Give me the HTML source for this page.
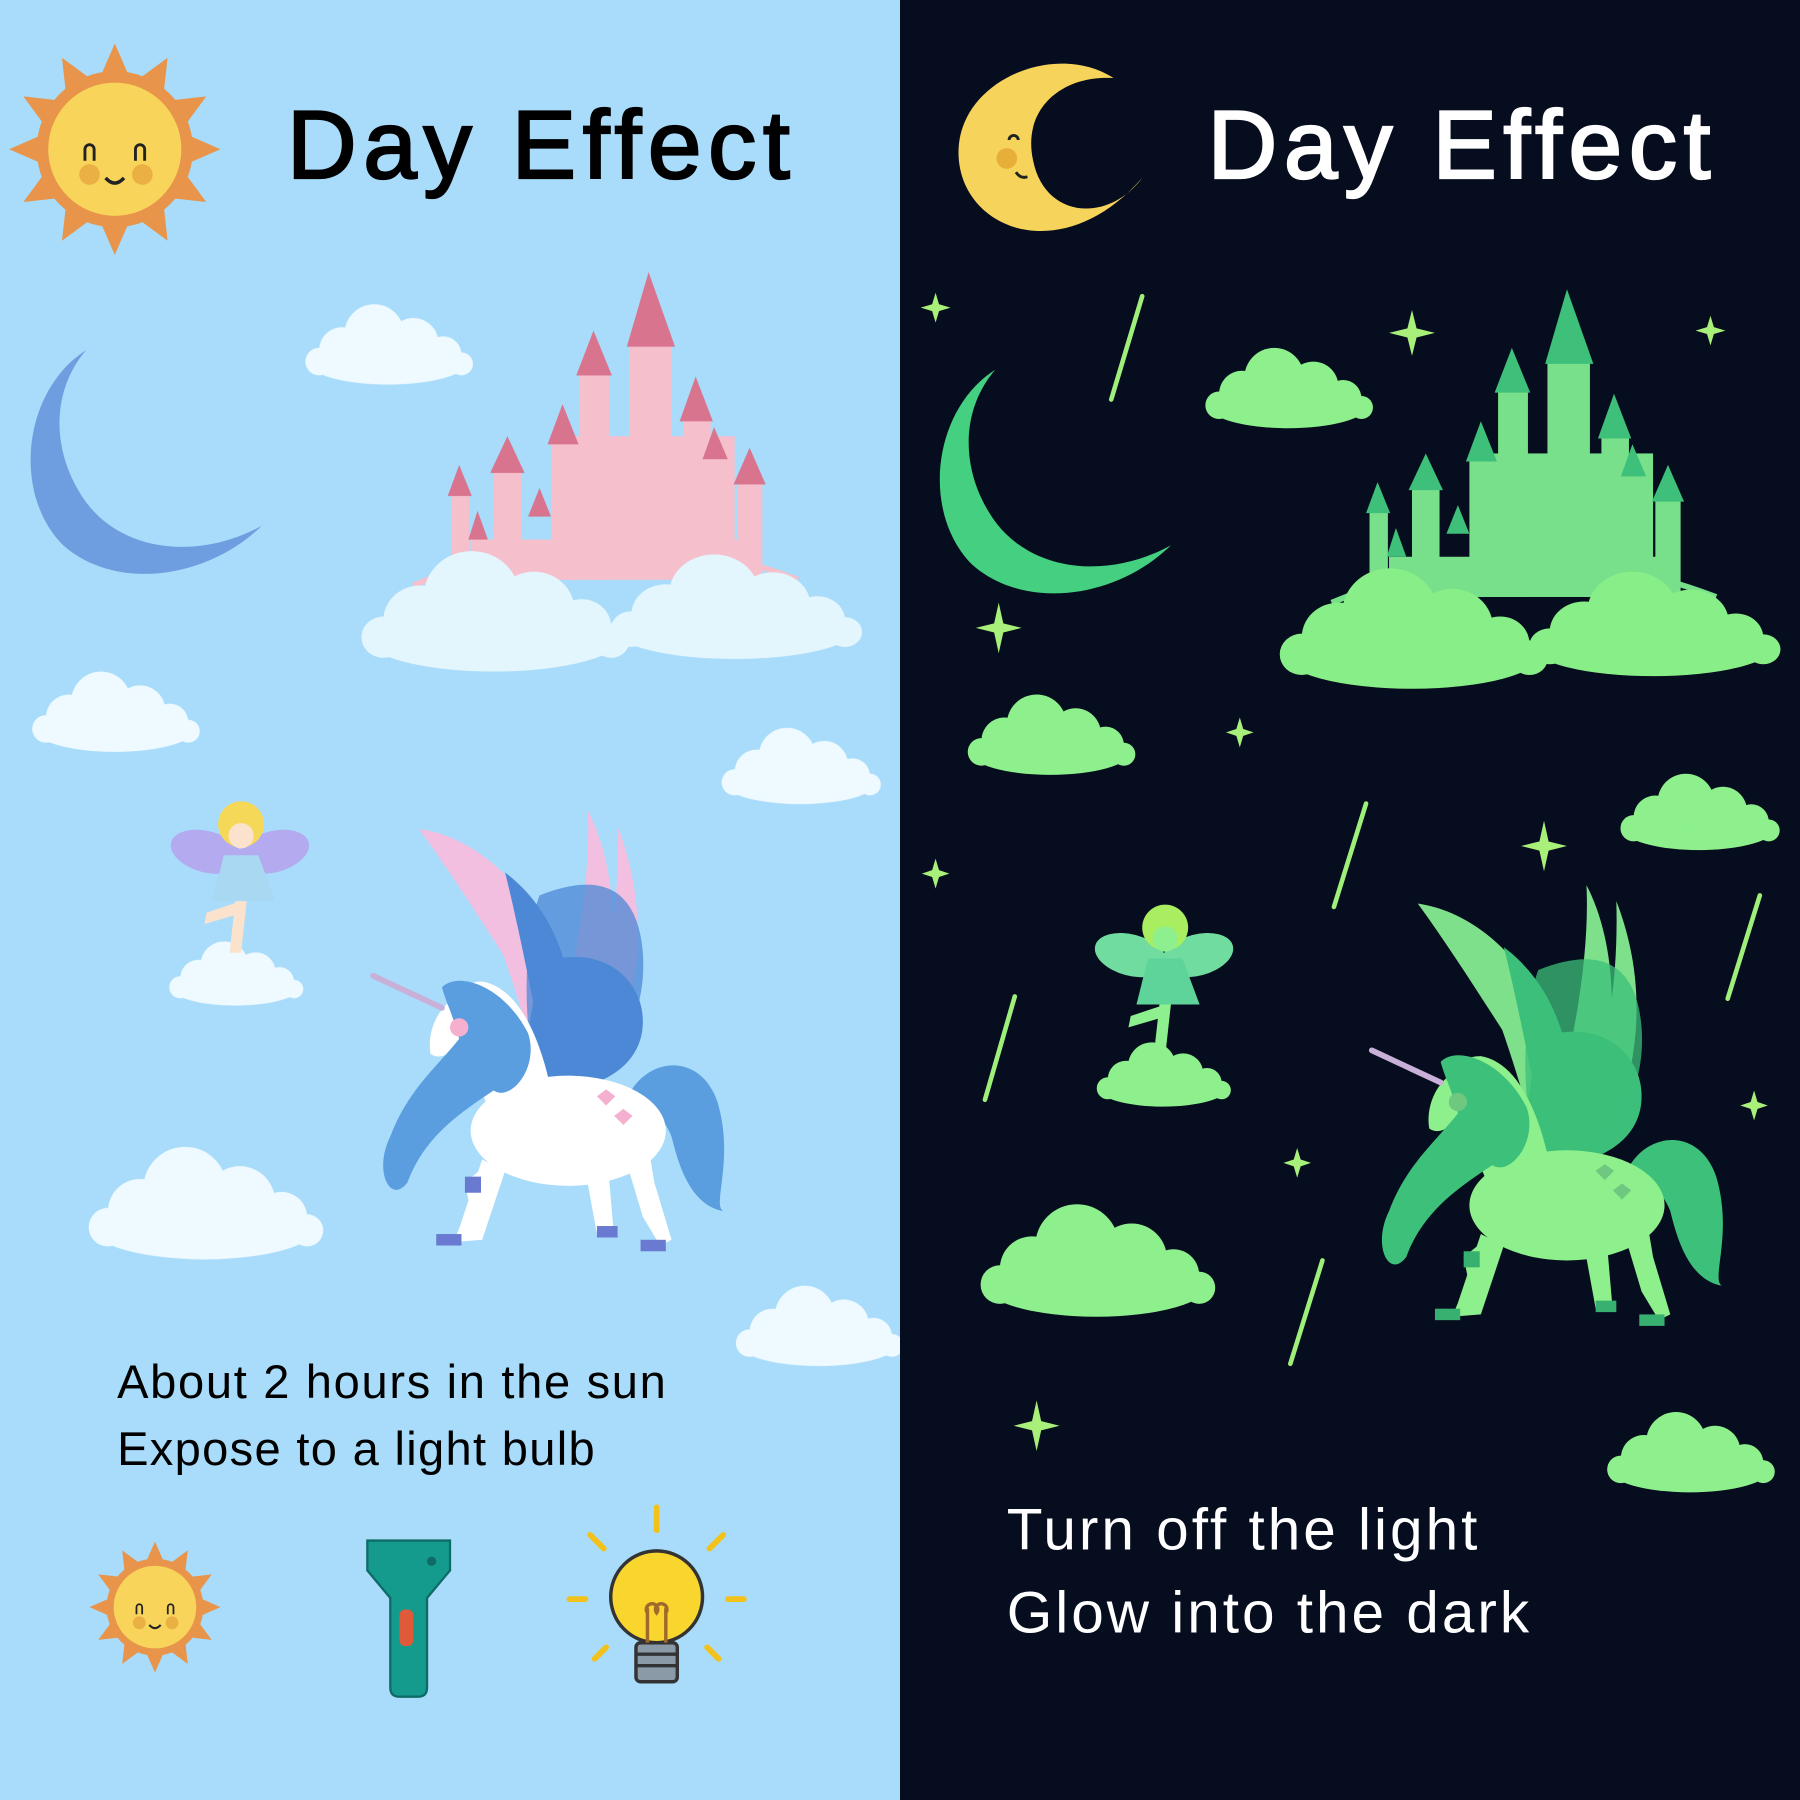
<!DOCTYPE html>
<html><head><meta charset="utf-8"><style>
html,body{margin:0;padding:0;width:1800px;height:1800px;overflow:hidden;background:#060d1e}
svg{display:block}
.t{font-family:"Liberation Sans",sans-serif}
</style></head><body>
<svg width="1800" height="1800" viewBox="0 0 1568 1568" xmlns="http://www.w3.org/2000/svg">
<defs>
<g id="cloud">
 <ellipse cx="0" cy="10" rx="70" ry="20"/>
 <circle cx="-40" cy="0" r="20"/><circle cx="-12" cy="-14" r="26"/><circle cx="22" cy="-6" r="22"/><circle cx="48" cy="4" r="16"/><circle cx="-60" cy="10" r="12"/><circle cx="64" cy="12" r="10"/>
</g>
<g id="uni">
 <path d="M365 722 C420 730 470 780 490 850 L470 880 C430 820 400 770 365 722Z" style="fill:var(--w1)"/>
 <path d="M400 735 C450 760 480 820 490 880 L460 900 C440 830 420 780 400 735Z" style="fill:var(--w1)"/>
 <path d="M440 760 C480 790 500 840 500 900 L470 900 C460 850 450 800 440 760Z" style="fill:var(--w2)"/>
 <path d="M512 706 C540 760 540 840 520 900 L480 920 C500 850 515 770 512 706Z" style="fill:var(--w1)"/>
 <path d="M538 720 C565 790 560 860 530 930 L500 930 C530 860 540 790 538 720Z" style="fill:var(--w1)"/>
 <path d="M470 840 C520 820 560 850 560 890 C560 930 520 950 480 950 L460 900Z" style="fill:var(--w2)"/>
 <path d="M470 780 C520 760 555 770 560 830 C565 900 520 950 470 950 C455 900 455 820 470 780Z" style="fill:var(--w2);opacity:.75"/>
 <path d="M545 960 C560 920 610 915 625 960 C640 1010 620 1050 630 1055 C600 1050 590 1010 585 990 C575 965 560 965 545 990Z" style="fill:var(--mane)"/>
 <path d="M430 1010 L405 1030 L410 1055 L425 1045 L440 1020Z" style="fill:var(--body)"/>
 <path d="M440 1020 L420 1080 L395 1082 L400 1070 L420 1010Z" style="fill:var(--body)"/>
 <path d="M510 1020 L520 1075 L535 1078 L530 1020Z" style="fill:var(--body)"/>
 <path d="M545 1010 L560 1060 L575 1085 L585 1080 L570 1030 L565 1000Z" style="fill:var(--body)"/>
 <rect x="380" y="1075" width="22" height="10" style="fill:var(--hoof)"/>
 <rect x="520" y="1068" width="18" height="10" style="fill:var(--hoof)"/>
 <rect x="558" y="1080" width="22" height="10" style="fill:var(--hoof)"/>
 <rect x="405" y="1025" width="14" height="14" style="fill:var(--hoof)"/>
 <ellipse cx="495" cy="985" rx="85" ry="48" style="fill:var(--body)"/>
 <path d="M410 900 C395 870 400 855 420 855 C450 860 470 900 480 950 L440 990 C420 960 410 930 410 900Z" style="fill:var(--body)"/>
 <path d="M395 870 C380 880 372 900 375 918 C385 925 395 915 405 905Z" style="fill:var(--body)"/>
 <path d="M325 850 L385 878" stroke="#c9b0d8" stroke-width="5" stroke-linecap="round"/>
 <path d="M385 860 C400 845 440 860 460 900 C470 930 445 960 430 950 C400 970 370 990 355 1030 C340 1050 325 1020 340 990 C355 950 380 930 400 905 C395 885 388 872 385 860Z" style="fill:var(--mane)"/>
 <circle cx="400" cy="895" r="8" style="fill:var(--cheek)"/>
 <path d="M520 955 l8 -6 l8 6 l-8 8z M535 972 l8 -6 l8 6 l-8 8z" style="fill:var(--cheek)"/>
</g>
<g id="castle">
 <rect x="490" y="380" width="150" height="125" style="fill:var(--c)"/>
 <rect x="548" y="300" width="37" height="200" style="fill:var(--c)"/>
 <rect x="505" y="325" width="26" height="180" style="fill:var(--c)"/>
 <rect x="480" y="385" width="22" height="120" style="fill:var(--c)"/>
 <rect x="595" y="365" width="24" height="140" style="fill:var(--c)"/>
 <rect x="430" y="410" width="24" height="95" style="fill:var(--c)"/>
 <rect x="393" y="430" width="16" height="75" style="fill:var(--c)"/>
 <rect x="642" y="420" width="22" height="85" style="fill:var(--c)"/>
 <rect x="410" y="470" width="240" height="35" style="fill:var(--c)"/>
 <path d="M546 302 L565 237 L588 302Z M502 327 L517 288 L533 327Z M477 387 L490 352 L504 387Z M592 367 L606 328 L621 367Z M427 412 L442 380 L457 412Z M390 432 L400 405 L411 432Z M639 422 L653 390 L667 422Z M612 400 L622 372 L634 400Z M408 470 L416 445 L425 470Z M460 450 L470 425 L480 450Z" style="fill:var(--r)"/>
 <path d="M360 510 Q525 440 695 505" fill="none" style="stroke:var(--c)" stroke-width="5"/>
</g>
<g id="crescent">
 <path d="M75 305 C20 340 10 430 55 475 C100 515 180 505 228 458 C170 490 100 480 70 430 C45 390 45 340 75 305Z"/>
</g>
<g id="fairy">
 <ellipse cx="180" cy="742" rx="32" ry="18" transform="rotate(15 180 742)" style="fill:var(--fw)"/>
 <ellipse cx="238" cy="742" rx="32" ry="18" transform="rotate(-15 238 742)" style="fill:var(--fw)"/>
 <path d="M195 745 L225 745 L240 785 L185 785Z" style="fill:var(--fd)"/>
 <path d="M205 785 L200 830 L210 830 L215 785Z M210 785 L180 795 L178 805 L212 795Z" style="fill:var(--sk)"/>
 <circle cx="210" cy="718" r="20" style="fill:var(--hair)"/>
 <circle cx="210" cy="728" r="11" style="fill:var(--sk)"/>
</g>
<g id="sun">
 <g fill="#e8944a">
  <polygon points="0,-92 14,-60 -14,-60"/><polygon points="0,92 14,60 -14,60"/><polygon points="-92,0 -60,14 -60,-14"/><polygon points="92,0 60,14 60,-14"/>
  <g transform="rotate(30)"><polygon points="0,-92 14,-60 -14,-60"/><polygon points="0,92 14,60 -14,60"/><polygon points="-92,0 -60,14 -60,-14"/><polygon points="92,0 60,14 60,-14"/></g>
  <g transform="rotate(60)"><polygon points="0,-92 14,-60 -14,-60"/><polygon points="0,92 14,60 -14,60"/><polygon points="-92,0 -60,14 -60,-14"/><polygon points="92,0 60,14 60,-14"/></g>
  <circle r="68"/>
 </g>
 <circle r="58" fill="#f8d45a"/>
 <circle cx="-22" cy="22" r="9" fill="#eab044"/><circle cx="24" cy="22" r="9" fill="#eab044"/>
 <path d="M-26 10 v-10 a4 4 0 0 1 8 0 v10 M18 10 v-10 a4 4 0 0 1 8 0 v10" stroke="#222" stroke-width="2.5" fill="none"/>
 <path d="M-8 25 q8 9 16 0" stroke="#222" stroke-width="3" fill="none"/>
</g>
</defs>

<rect x="0" y="0" width="784" height="1568" fill="#a8dcfa"/>
<use href="#sun" transform="translate(100,130)"/>
<text x="250" y="155" class="t" font-size="84" fill="#000" stroke="#000" stroke-width="2" textLength="438" lengthAdjust="spacing">Day Effect</text>

<use href="#crescent" fill="#6f9ee0"/>
<g fill="#f2fbff" opacity=".95">
 <use href="#cloud" transform="translate(338,305)"/>
 <use href="#cloud" transform="translate(100,625)"/>
 <use href="#cloud" transform="translate(697,672) scale(0.95)"/>
 <use href="#cloud" transform="translate(178,1055) scale(1.4)"/>
 <use href="#cloud" transform="translate(713,1160)"/>
 <use href="#cloud" transform="translate(205,852) scale(0.8)"/>
</g>
<g style="--c:#f5c0cc;--r:#d9748e"><use href="#castle"/></g>
<g fill="#e4f6fd">
 <use href="#cloud" transform="translate(430,540) scale(1.6,1.5)"/>
 <use href="#cloud" transform="translate(640,535) scale(1.5,1.3)"/>
</g>
<g style="--fw:#b3aaf0;--fd:#a8d8f2;--sk:#fbe2cc;--hair:#f6d858"><use href="#fairy"/></g>
<g style="--body:#ffffff;--mane:#5a9ee0;--w1:#f2bfe0;--w2:#4c88d6;--hoof:#6a7ad0;--cheek:#f5b0d0"><use href="#uni"/></g>

<text x="102" y="1218" class="t" font-size="41" fill="#000" textLength="478" lengthAdjust="spacing">About 2 hours in the sun</text>
<text x="102" y="1276" class="t" font-size="41" fill="#000" textLength="416" lengthAdjust="spacing">Expose to a light bulb</text>

<use href="#sun" transform="translate(135,1400) scale(0.62)"/>
<path d="M320 1342 H392 V1368 L372 1392 V1470 Q372 1478 364 1478 H348 Q340 1478 340 1470 V1392 L320 1368Z" fill="#159a8e" stroke="#0f6b66" stroke-width="2"/>
<rect x="348" y="1402" width="12" height="32" rx="5" fill="#e05a3a"/>
<circle cx="376" cy="1360" r="4" fill="#0f6b66"/>
<g transform="translate(572,1395)">
 <circle cx="0" cy="-4" r="40" fill="#f8d62e" stroke="#333" stroke-width="3"/>
 <rect x="-18" y="36" width="36" height="34" rx="4" fill="#8a9aa6" stroke="#333" stroke-width="3"/>
 <path d="M-18 46 H18 M-18 56 H18" stroke="#333" stroke-width="3"/>
 <path d="M-8 36 V6 M8 36 V6 M-8 10 a5 5 0 1 1 8 0 a5 5 0 1 1 8 0" stroke="#a0682a" stroke-width="3" fill="none"/>
 <g stroke="#f2c21a" stroke-width="5" stroke-linecap="round">
  <path d="M0 -62 V-82 M-46 -46 L-58 -58 M46 -46 L58 -58 M-62 -2 H-76 M62 -2 H76 M-44 40 L-54 50 M44 40 L54 50"/>
 </g>
</g>

<rect x="784" y="0" width="784" height="1568" fill="#060d1e"/>
<g transform="translate(915,130)">
 <path d="M55 -62 C5 -95 -82 -60 -80 5 C-78 70 10 105 80 25 C50 65 -5 60 -15 10 C-25 -35 10 -65 55 -62Z" fill="#f6d35a"/>
 <circle cx="-38" cy="8" r="9" fill="#e8ae3a"/>
 <path d="M-36 -8 a4 4 0 0 1 8 0 M-30 20 q4 6 10 4" stroke="#222" stroke-width="2.5" fill="none"/>
</g>
<text x="1052" y="155" class="t" font-size="84" fill="#fff" stroke="#fff" stroke-width="2" textLength="438" lengthAdjust="spacing">Day Effect</text>

<g fill="#8df08c">
 <g transform="translate(792,17)"><use href="#crescent" fill="#44d080"/></g>
 <use href="#cloud" transform="translate(1122,343)"/>
 <use href="#cloud" transform="translate(915,645)"/>
 <use href="#cloud" transform="translate(1480,712) scale(0.95)"/>
 <use href="#cloud" transform="translate(955,1105) scale(1.4)"/>
 <use href="#cloud" transform="translate(1472,1270)"/>
 <use href="#cloud" transform="translate(1013,940) scale(0.8)"/>
</g>
<g transform="translate(800,15)" style="--c:#78e08a;--r:#3ec07a"><use href="#castle"/></g>
<g fill="#88ee88">
 <use href="#cloud" transform="translate(1230,555) scale(1.6,1.5)"/>
 <use href="#cloud" transform="translate(1440,550) scale(1.5,1.3)"/>
</g>
<g transform="translate(805,90)" style="--fw:#70dca0;--fd:#5ed49a;--sk:#8eef8e;--hair:#a8ee60"><use href="#fairy"/></g>
<g transform="translate(870,65)" style="--body:#8ef08c;--mane:#3cc07a;--w1:#7ee08a;--w2:#3cbf7a;--hoof:#38b070;--cheek:#6fc880"><use href="#uni"/></g>
<g stroke="#9ef07a" stroke-width="4" stroke-linecap="round">
 <path d="M995 258 L968 348 M1190 700 L1162 790 M1533 780 L1505 870 M884 868 L858 958 M1152 1098 L1124 1188"/>
</g>
<g fill="#a8f07a">
 <path d="M815 255 l3 10 l10 3 l-10 3 l-3 10 l-3 -10 l-10 -3 l10 -3z"/>
 <path d="M1230 270 l4 16 l16 4 l-16 4 l-4 16 l-4 -16 l-16 -4 l16 -4z"/>
 <path d="M1490 275 l3 10 l10 3 l-10 3 l-3 10 l-3 -10 l-10 -3 l10 -3z"/>
 <path d="M870 525 l4 18 l16 4 l-16 4 l-4 18 l-4 -18 l-16 -4 l16 -4z"/>
 <path d="M1080 625 l3 10 l9 3 l-9 3 l-3 10 l-3 -10 l-9 -3 l9 -3z"/>
 <path d="M1345 715 l4 18 l16 4 l-16 4 l-4 18 l-4 -18 l-16 -4 l16 -4z"/>
 <path d="M815 748 l3 10 l9 3 l-9 3 l-3 10 l-3 -10 l-9 -3 l9 -3z"/>
 <path d="M1130 1000 l3 10 l9 3 l-9 3 l-3 10 l-3 -10 l-9 -3 l9 -3z"/>
 <path d="M1528 950 l3 10 l9 3 l-9 3 l-3 10 l-3 -10 l-9 -3 l9 -3z"/>
 <path d="M903 1220 l4 18 l16 4 l-16 4 l-4 18 l-4 -18 l-16 -4 l16 -4z"/>
</g>

<text x="877" y="1350" class="t" font-size="51" fill="#fff" textLength="410" lengthAdjust="spacing">Turn off the light</text>
<text x="877" y="1422" class="t" font-size="51" fill="#fff" textLength="455" lengthAdjust="spacing">Glow into the dark</text>
</svg>
</body></html>
